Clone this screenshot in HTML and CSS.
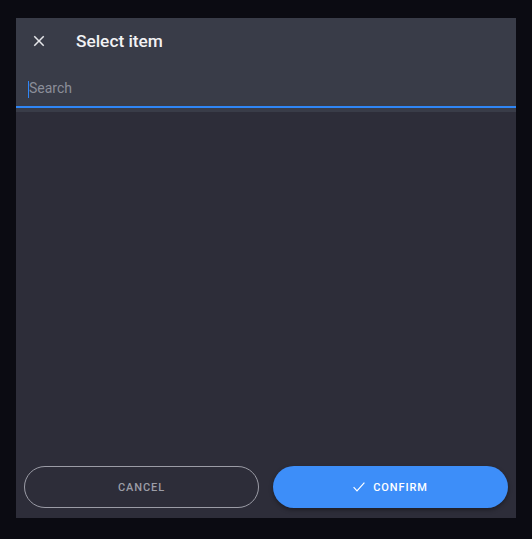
FILE: index.html
```html
<!DOCTYPE html>
<html lang="en">
<head>
<meta charset="utf-8">
<title>Select item</title>
<link rel="stylesheet" href="styles.css">
</head>
<body>
<div class="dialog">
  <header class="head">
    <div class="title-row">
      <button class="icon-btn" aria-label="Close">
        <svg viewBox="0 0 24 24" width="18" height="18"><path d="M19 6.41 17.59 5 12 10.59 6.41 5 5 6.41 10.59 12 5 17.59 6.41 19 12 13.41 17.59 19 19 17.59 13.41 12z" fill="currentColor"/></svg>
      </button>
      <h1 class="title">Select item</h1>
    </div>
    <div class="field">
      <input class="search" type="text" placeholder="Search">
      <span class="caret"></span>
    </div>
  </header>
  <main class="list"></main>
  <footer class="actions">
    <button class="btn btn-outline">CANCEL</button>
    <button class="btn btn-primary">
      <svg class="check" viewBox="0 0 12 10" width="12" height="10"><polyline points="0.6,5.2 4,8.8 11.4,0.6" fill="none" stroke="currentColor" stroke-width="1.2"/></svg>
      CONFIRM
    </button>
  </footer>
</div>
</body>
</html>
```

FILE: styles.css
```css
html, body {
  margin: 0;
  padding: 0;
  height: 100%;
}
body {
  background: #0b0b12;
  font-family: Roboto, "Liberation Sans", sans-serif;
  padding: 18px 16px 21px;
  box-sizing: border-box;
}
.dialog {
  width: 500px;
  height: 500px;
  display: flex;
  flex-direction: column;
  background: #2d2d39;
}
.head {
  background: #393c48;
  padding-bottom: 4px;
}
.title-row {
  height: 46px;
  display: flex;
  align-items: center;
  padding-left: 14px;
  gap: 28px;
}
.icon-btn {
  width: 18px;
  height: 18px;
  padding: 0;
  border: 0;
  background: none;
  color: #e6e7ea;
  display: flex;
}
.title {
  margin: 0;
  font-size: 17.3px;
  font-weight: 500;
  color: #f2f2f4;
  line-height: 1;
  padding-top: 1px;
}
.field {
  position: relative;
  height: 42px;
  border-bottom: 2px solid #2f86f6;
}
.search {
  width: 100%;
  height: 100%;
  box-sizing: border-box;
  border: 0;
  outline: none;
  background: transparent;
  padding: 5px 0 0 13px;
  font-family: Roboto, "Liberation Sans", sans-serif;
  font-size: 14px;
  color: #e6e7ea;
  caret-color: transparent;
}
.search::placeholder {
  color: #8b8e99;
}
.caret {
  position: absolute;
  left: 12px;
  top: 17px;
  width: 1px;
  height: 17px;
  background: #2f86f6;
}
.list {
  flex: 1;
}
.actions {
  display: grid;
  grid-template-columns: 1fr 1fr;
  gap: 14px;
  padding: 0 8px 10px;
}
.btn {
  box-sizing: border-box;
  height: 42px;
  padding: 0;
  border-radius: 21px;
  font-family: Roboto, "Liberation Sans", sans-serif;
  font-size: 11px;
  font-weight: 500;
  letter-spacing: 0.9px;
  display: flex;
  align-items: center;
  justify-content: center;
  gap: 8px;
  cursor: pointer;
}
.btn-outline {
  background: transparent;
  border: 1px solid #9b9ca6;
  color: #9c9da7;
}
.btn-primary {
  background: #3d8ef9;
  border: 0;
  color: #ffffff;
  box-shadow: 0 2px 4px rgba(0, 0, 0, 0.35);
}
.check {
  margin-top: -1px;
}
```
